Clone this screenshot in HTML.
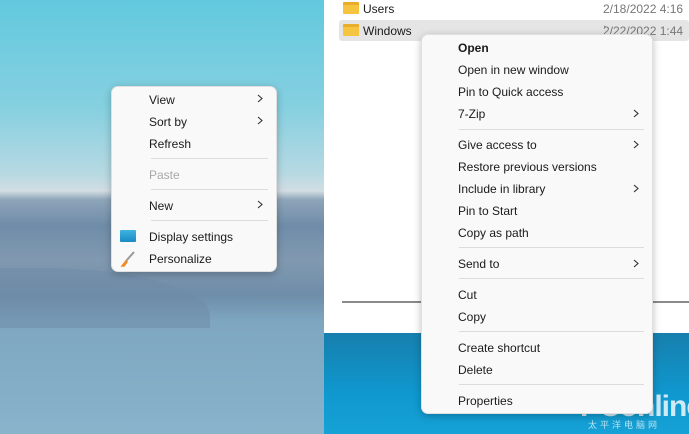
<!DOCTYPE html>
<html><head><style>
*{margin:0;padding:0;box-sizing:border-box}
body{width:689px;height:434px;overflow:hidden;position:relative;font-family:"Liberation Sans","DejaVu Sans",sans-serif;font-size:12px;color:#1a1a1a}
.desk{position:absolute;left:0;top:0;width:324px;height:434px;background:linear-gradient(180deg,#62c9de 0%,#86d0e0 25%,#b7d9e2 40%,#d2dde3 44%,#8ea5b9 46%,#6f8ca8 52%,#8199b0 60%,#6e8da9 68%,#7ea6c0 74%,#88b3cb 100%)}
.hill{position:absolute;left:0;top:268px;width:210px;height:60px;background:#6d8aa6;border-radius:0 80% 0 0;opacity:.5}
.exp{position:absolute;left:324px;top:0;width:365px;height:333px;background:#fff}
.blue{position:absolute;left:324px;top:333px;width:365px;height:101px;background:linear-gradient(180deg,#177fad,#0f98cf 60%,#16a2d6)}
.sel{position:absolute;left:339px;top:20px;width:350px;height:21px;background:#e5e5e5;border-radius:3px}
.row{position:absolute;left:363px;font-size:12px}
.fold{position:absolute;left:343px;width:16px;height:12px;background:#f5c542;border-radius:1px;border-top:3px solid #e9ad2a}
.date{position:absolute;left:603px;color:#777}
.line{position:absolute;left:342px;top:301px;width:347px;height:2px;background:#8a8a8a}
.menu{position:absolute;background:#f9f9f9;border-radius:7px;box-shadow:0 2px 8px rgba(0,0,0,.25);border:1px solid #e0e0e0}
.it{position:absolute;white-space:nowrap;line-height:14px}
.ch{position:absolute;width:6px;height:9px}
.sep{position:absolute;height:1px;background:#dcdcdc}
.wm{position:absolute;left:580px;top:390px;color:rgba(255,255,255,.8);font-size:30px;font-weight:bold;letter-spacing:-1px}
.wm2{position:absolute;left:588px;top:418px;color:rgba(255,255,255,.7);font-size:9px;letter-spacing:3px;font-family:"Liberation Sans","Noto Sans CJK SC",sans-serif}
</style></head><body>
<div class="desk"><div class="hill"></div></div>
<div class="exp"></div>
<div class="blue"></div>
<div class="sel"></div>
<div class="fold" style="top:2px"></div><div class="row" style="top:2px">Users</div><div class="date" style="top:2px">2/18/2022 4:16 .</div>
<div class="fold" style="top:24px"></div><div class="row" style="top:24px">Windows</div><div class="date" style="top:24px">2/22/2022 1:44</div>
<div class="line"></div>
<div class="wm">PConline</div><div class="wm2">太平洋电脑网</div>

<div class="menu" style="left:111px;top:86px;width:166px;height:186px"></div>
<div class="it" style="left:149px;top:93px">View</div><svg class="ch" style="left:257px;top:94px"><path d="M1 1L5 4.5L1 8" fill="none" stroke="#333" stroke-width="1.1"/></svg>
<div class="it" style="left:149px;top:115px">Sort by</div><svg class="ch" style="left:257px;top:116px"><path d="M1 1L5 4.5L1 8" fill="none" stroke="#333" stroke-width="1.1"/></svg>
<div class="it" style="left:149px;top:137px">Refresh</div>
<div class="sep" style="left:151px;top:158px;width:117px"></div>
<div class="it" style="left:149px;top:168px;color:#a8a8a8">Paste</div>
<div class="sep" style="left:151px;top:189px;width:117px"></div>
<div class="it" style="left:149px;top:199px">New</div><svg class="ch" style="left:257px;top:200px"><path d="M1 1L5 4.5L1 8" fill="none" stroke="#333" stroke-width="1.1"/></svg>
<div class="sep" style="left:151px;top:220px;width:117px"></div>
<div style="position:absolute;left:120px;top:230px;width:16px;height:12px;background:linear-gradient(#3cb4e0,#1a8ac4);border-radius:1px"></div>
<div class="it" style="left:149px;top:230px">Display settings</div>
<svg style="position:absolute;left:120px;top:251px" width="16" height="16"><path d="M14 1 L6 10" stroke="#999" stroke-width="2"/><path d="M6 10 L2 15 L4 15 L7 11Z" fill="#f08a24" stroke="#f08a24" stroke-width="1.5"/></svg>
<div class="it" style="left:149px;top:252px">Personalize</div>

<div class="menu" style="left:421px;top:34px;width:232px;height:380px"></div>
<div class="it" style="left:458px;top:41px;font-weight:bold">Open</div>
<div class="it" style="left:458px;top:63px">Open in new window</div>
<div class="it" style="left:458px;top:85px">Pin to Quick access</div>
<div class="it" style="left:458px;top:107px">7-Zip</div><svg class="ch" style="left:633px;top:109px"><path d="M1 1L5 4.5L1 8" fill="none" stroke="#333" stroke-width="1.1"/></svg>
<div class="sep" style="left:459px;top:129px;width:185px"></div>
<div class="it" style="left:458px;top:138px">Give access to</div><svg class="ch" style="left:633px;top:140px"><path d="M1 1L5 4.5L1 8" fill="none" stroke="#333" stroke-width="1.1"/></svg>
<div class="it" style="left:458px;top:160px">Restore previous versions</div>
<div class="it" style="left:458px;top:182px">Include in library</div><svg class="ch" style="left:633px;top:184px"><path d="M1 1L5 4.5L1 8" fill="none" stroke="#333" stroke-width="1.1"/></svg>
<div class="it" style="left:458px;top:204px">Pin to Start</div>
<div class="it" style="left:458px;top:226px">Copy as path</div>
<div class="sep" style="left:459px;top:247px;width:185px"></div>
<div class="it" style="left:458px;top:257px">Send to</div><svg class="ch" style="left:633px;top:259px"><path d="M1 1L5 4.5L1 8" fill="none" stroke="#333" stroke-width="1.1"/></svg>
<div class="sep" style="left:459px;top:278px;width:185px"></div>
<div class="it" style="left:458px;top:288px">Cut</div>
<div class="it" style="left:458px;top:310px">Copy</div>
<div class="sep" style="left:459px;top:331px;width:185px"></div>
<div class="it" style="left:458px;top:341px">Create shortcut</div>
<div class="it" style="left:458px;top:363px">Delete</div>
<div class="sep" style="left:459px;top:384px;width:185px"></div>
<div class="it" style="left:458px;top:394px">Properties</div>
</body></html>
